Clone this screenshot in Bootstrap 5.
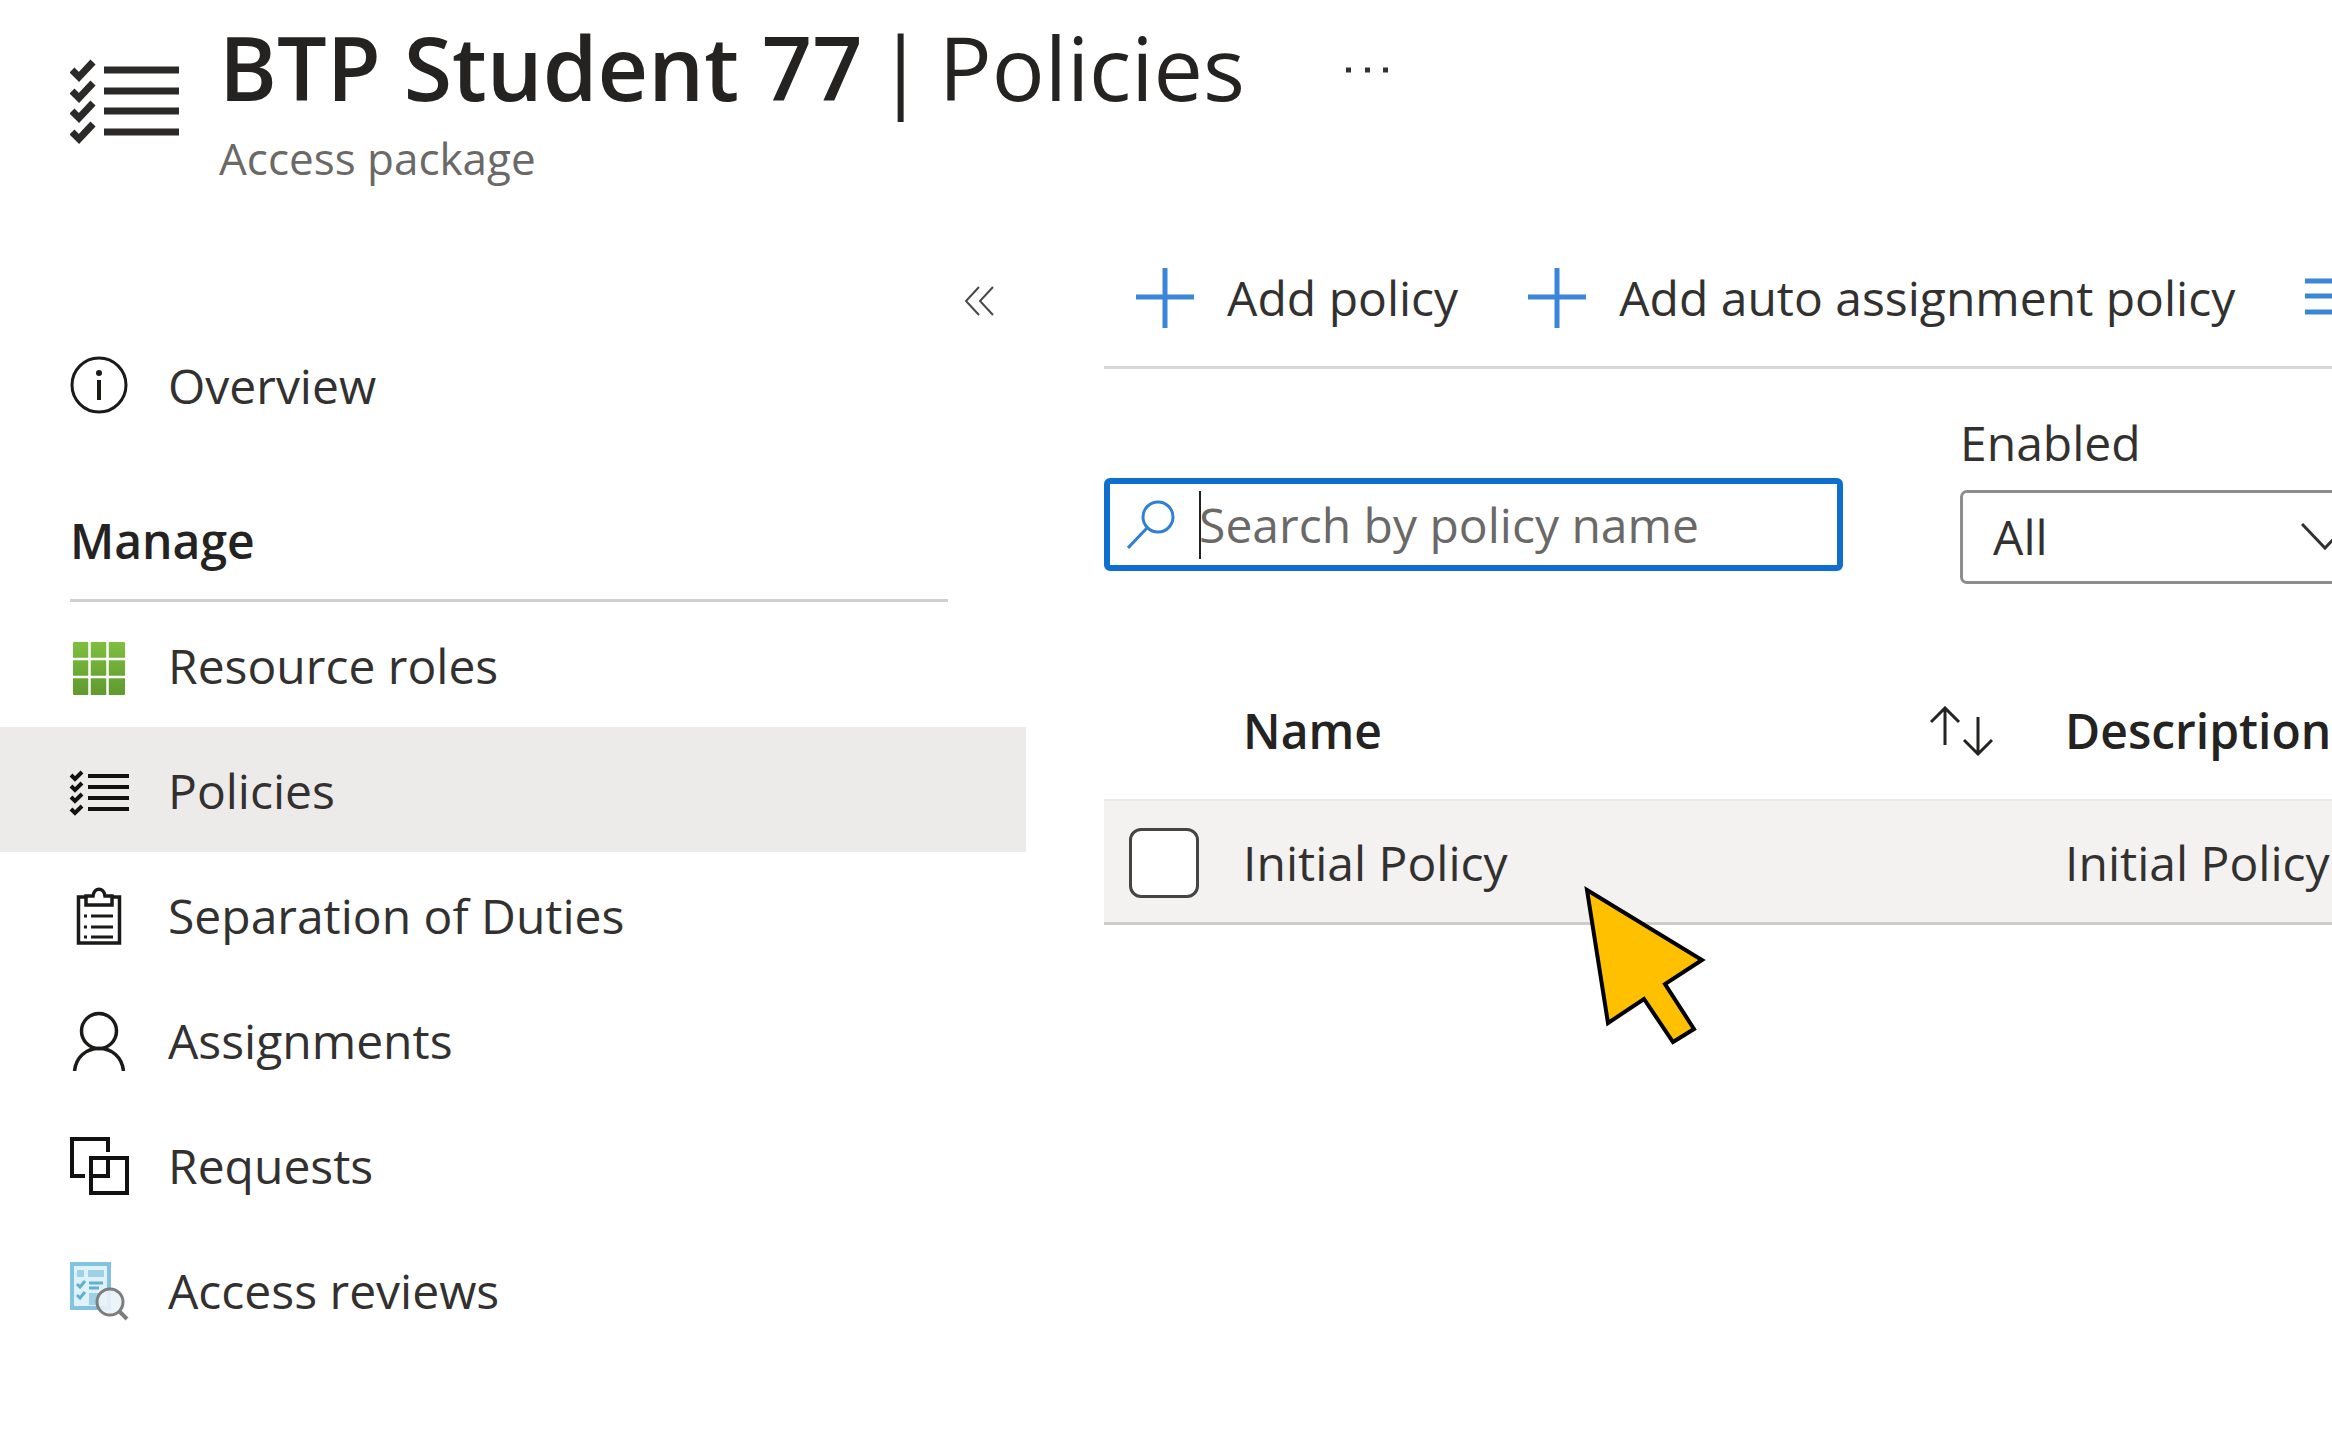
<!DOCTYPE html>
<html lang="en">
<head>
<meta charset="utf-8">
<meta name="viewport" content="width=device-width, initial-scale=1">
<title>BTP Student 77 | Policies</title>
<link rel="stylesheet" href="https://cdn.jsdelivr.net/npm/bootstrap@5.3.0/dist/css/bootstrap.min.css">
<style>
  :root { --ink: #323130; --strong: #242322; --accent: #0f6fd0; }
  body { font-family: "Open Sans", "Noto Sans", sans-serif; font-size: 48px; line-height: 64px; color: var(--ink); background: #fff; overflow: hidden; }
  svg { display: block; flex: none; }
  .page-head { padding: 12px 70px 36px; gap: 40px; }
  .page-head h1 { font-size: 88px; line-height: 110px; font-weight: 600; color: var(--strong); margin: 0; gap: 14px; }
  .head-icon { margin-top: 47px; }
  .subtitle { font-size: 44px; line-height: 72px; color: #6b6967; }
  .side { width: 44%; flex: none; }
  .collapse-bar { height: 92px; padding: 0 32px 6px 0; }
  .side-link { height: 125px; padding-left: 69px; padding-top: 2px; gap: 39px; color: var(--ink); border-radius: 0; }
  .side-link:hover { color: var(--ink); }
  .side-link.active { background: #ecebea; }
  .side-title { margin: 0 78px 0 70px; padding: 62px 0 26px; border-bottom: 3px solid #d0cfce; font-size: 48px; line-height: 64px; font-weight: 600; color: var(--strong); }
  .main-pane { margin-left: 78px; min-width: 0; }
  .toolbar { height: 139px; border-bottom: 3px solid #d8d7d6; padding-left: 32px; gap: 70px; }
  .tool { --bs-btn-color: #323130; font-size: 48px; line-height: 64px; gap: 33px; }
  .filters { padding-top: 42px; gap: 117px; }
  .search-box { width: 739px; height: 93px; flex: none; margin-bottom: 13px; border: 6px solid var(--accent); border-radius: 6px; padding-left: 17px; gap: 24px; }
  .search-box input { font-size: 48px; line-height: 64px; color: var(--ink); outline: 0; }
  .search-box input::placeholder { color: #6b6967; opacity: 1; }
  .caret { left: 0; top: -2px; width: 2px; height: 68px; background: #222; }
  .enabled-box { width: 410px; flex: none; }
  .enabled-box label { margin-bottom: 15px; line-height: 64px; display: block; }
  .enabled-box .form-select {
    height: 94px; font-size: 48px; line-height: 64px; padding: 0 80px 0 30px; color: var(--ink);
    border: 3px solid #8f8d8b; border-radius: 7px;
    background-image: url("data:image/svg+xml,%3Csvg xmlns='http://www.w3.org/2000/svg' viewBox='0 0 48 28'%3E%3Cpath fill='none' stroke='%23323130' stroke-width='3' d='M1 1l23 24L47 1'/%3E%3C/svg%3E");
    background-size: 48px 28px; background-position: right 18px center;
  }
  .policy-table { table-layout: fixed; margin: 79px 0 0; color: var(--ink); border-collapse: separate; border-spacing: 0; }
  .policy-table > :not(caption) > * > * { padding: 0; border: 0; color: inherit; white-space: nowrap; box-shadow: none; vertical-align: middle; }
  .policy-table > thead > tr > th { height: 136px; font-weight: 600; color: var(--strong); }
  .policy-table > tbody > tr > td { height: 126px; padding-top: 2px; background: #f3f2f1; border-top: 2px solid #ebeae9; border-bottom: 3px solid #cdccca; }
  .col-tick { width: 139px; }
  .col-name { width: 822px; }
  .tick { width: 70px; height: 70px; margin: 0 0 0 25px; border: 3px solid #454443; border-radius: 8px; display: block; float: none; }
  .sort-icon { margin-right: 72px; }
  .pointer { left: 339px; top: 48px; z-index: 2; }
</style>
<script src="https://cdn.jsdelivr.net/npm/bootstrap@5.3.0/dist/js/bootstrap.bundle.min.js"></script>
</head>
<body>
<svg width="0" height="0" class="position-absolute" aria-hidden="true">
  <defs>
    <symbol id="plus" viewBox="0 0 58 60"><path d="M29 0v60M0 29h58" stroke="#3a86d8" stroke-width="5" fill="none"/></symbol>
    <linearGradient id="leaf" x1="0" y1="0" x2="0" y2="1"><stop offset="0" stop-color="#7fbf3f"/><stop offset="1" stop-color="#5e9a2e"/></linearGradient>
  </defs>
</svg>

<header class="page-head d-flex align-items-start">
  <svg class="head-icon" width="109" height="86" viewBox="0 0 109 86" aria-hidden="true">
    <g fill="none" stroke="#2b2a29" stroke-width="7">
      <path d="M34 11h75M34 32h75M34 52h75M34 73h75"/>
      <path d="M2 11l7 7L23 3M2 32l7 7L23 24M2 52l7 7L23 44M2 73l7 7L23 65"/>
    </g>
  </svg>
  <div>
    <div class="d-flex align-items-center">
      <h1 class="d-flex"><span>BTP Student 77</span><span class="fw-normal">|</span><span class="fw-normal">Policies</span></h1>
      <button type="button" class="btn border-0 p-0 ms-5" aria-label="More">
        <svg width="150" height="44" viewBox="0 0 150 44"><path d="M53 25h5M72 25h5M90 25h5" stroke="#323130" stroke-width="5"/></svg>
      </button>
    </div>
    <div class="subtitle">Access package</div>
  </div>
</header>

<div class="d-flex align-items-start">
  <nav class="side" aria-label="Access package">
    <div class="collapse-bar d-flex justify-content-end align-items-end">
      <button type="button" class="btn border-0 p-0" aria-label="Collapse menu">
        <svg width="30" height="30" viewBox="0 0 30 30"><path d="M15 1L2 15l13 14M29 1L16 15l13 14" fill="none" stroke="#4a4948" stroke-width="2"/></svg>
      </button>
    </div>
    <div class="nav flex-column">
      <a href="#" class="side-link nav-link d-flex align-items-center pb-0 pe-0">
        <svg width="60" height="60" viewBox="0 0 60 60"><circle cx="30" cy="29" r="27" fill="none" stroke="#1b1a19" stroke-width="3"/><path d="M30 24v20" stroke="#1b1a19" stroke-width="4"/><circle cx="30" cy="17" r="3" fill="#1b1a19"/></svg>
        Overview
      </a>
    </div>
    <h2 class="side-title">Manage</h2>
    <div class="nav flex-column">
      <a href="#" class="side-link nav-link d-flex align-items-center pb-0 pe-0">
        <svg width="60" height="60" viewBox="0 0 60 60"><rect x="4" y="6" width="52" height="53" rx="1" fill="url(#leaf)"/><path d="M20.500 6v53M38.500 6v53M4 23h52M4 41h52" stroke="#fff" stroke-width="2.500"/></svg>
        Resource roles
      </a>
      <a href="#" class="side-link nav-link active d-flex align-items-center pb-0 pe-0" aria-current="page">
        <svg width="60" height="60" viewBox="0 0 60 60"><g fill="none" stroke="#111" stroke-width="4"><path d="M19 15h41M19 26h41M19 37h41M19 48h41"/><path d="M2 14l4 4 7-7M2 25l4 4 7-7M2 36l4 4 7-7M2 48l4 4 7-7"/></g></svg>
        Policies
      </a>
      <a href="#" class="side-link nav-link d-flex align-items-center pb-0 pe-0">
        <svg width="60" height="60" viewBox="0 0 60 60"><g fill="none" stroke="#1b1a19" stroke-width="3.500"><path d="M16 11H9.500v46h41V11H44"/><path d="M17 10h7c1-9 11-9 12 0h7v9H17z"/><path d="M15 30h3M15 41h3M15 51h3M22 30h22M22 41h22M22 51h22" stroke-width="3"/></g></svg>
        Separation of Duties
      </a>
      <a href="#" class="side-link nav-link d-flex align-items-center pb-0 pe-0">
        <svg width="60" height="60" viewBox="0 0 60 60"><g fill="none" stroke="#1b1a19" stroke-width="3.500"><circle cx="30" cy="20" r="17.500"/><path d="M5.500 60C7 46 17 37.500 30 37.500S53 46 54.500 60"/></g></svg>
        Assignments
      </a>
      <a href="#" class="side-link nav-link d-flex align-items-center pb-0 pe-0">
        <svg width="60" height="60" viewBox="0 0 60 60"><g fill="none" stroke="#111" stroke-width="4"><path d="M16 40H3V3h36v13M23 40h16V23"/><path d="M22 22h36v35H22z"/></g></svg>
        Requests
      </a>
      <a href="#" class="side-link nav-link d-flex align-items-center pb-0 pe-0">
        <svg width="60" height="60" viewBox="0 0 60 60">
          <rect x="3" y="3" width="37" height="44" fill="#dff1f9" stroke="#82c4df" stroke-width="4"/>
          <path d="M8 9h7v7H8zM19 9h16v7H19z" fill="#9fd0e6"/>
          <path d="M8 23l3 3 5-6M8 34l3 3 5-6M20 22h14M20 27h10" fill="none" stroke="#5fb0d3" stroke-width="3"/>
          <path d="M20 32h12v12H20z" fill="#9fd0e6"/>
          <path d="M50 50l8 8" stroke="#7d7d7d" stroke-width="4"/>
          <circle cx="41" cy="41" r="13" fill="#e9f3f8" fill-opacity=".9" stroke="#7d7d7d" stroke-width="3"/>
        </svg>
        Access reviews
      </a>
    </div>
  </nav>

  <main class="main-pane flex-grow-1">
    <div class="toolbar d-flex align-items-center text-nowrap">
      <button type="button" class="tool btn border-0 p-0 d-flex align-items-center">
        <svg width="58" height="60"><use href="#plus"/></svg>Add policy
      </button>
      <button type="button" class="tool btn border-0 p-0 d-flex align-items-center">
        <svg width="58" height="60"><use href="#plus"/></svg>Add auto assignment policy
      </button>
      <button type="button" class="tool btn border-0 p-0" aria-label="Reorder policies">
        <svg width="58" height="40" viewBox="0 0 58 40"><path d="M0 3h58M0 18h58M0 34h58" stroke="#3a86d8" stroke-width="5"/></svg>
      </button>
    </div>

    <div class="filters d-flex align-items-end">
      <div class="search-box d-flex align-items-center">
        <svg width="48" height="50" viewBox="0 0 48 50" aria-hidden="true"><g fill="none" stroke="#2f7fd6" stroke-width="3"><circle cx="31" cy="17" r="15"/><path d="M20 28L1 48"/></g></svg>
        <div class="position-relative flex-grow-1">
          <input type="text" class="border-0 p-0 w-100 d-block bg-transparent" placeholder="Search by policy name" aria-label="Search by policy name">
          <span class="caret position-absolute"></span>
        </div>
      </div>
      <div class="enabled-box">
        <label for="enabled">Enabled</label>
        <select id="enabled" class="form-select"><option>All</option><option>Yes</option><option>No</option></select>
      </div>
    </div>

    <table class="policy-table table">
      <colgroup><col class="col-tick"><col class="col-name"><col></colgroup>
      <thead>
        <tr>
          <th scope="col" aria-label="Select"></th>
          <th scope="col">
            <div class="d-flex align-items-center justify-content-between">Name
              <svg class="sort-icon" width="63" height="50" viewBox="0 0 63 50" aria-hidden="true"><path d="M15 39V2M1 16L15 2l14 14M48 11v37M34 34l14 14 14-14" fill="none" stroke="#242322" stroke-width="3"/></svg>
            </div>
          </th>
          <th scope="col">Description</th>
        </tr>
      </thead>
      <tbody>
        <tr>
          <td><input type="checkbox" class="tick form-check-input" aria-label="Select Initial Policy"></td>
          <td>
            <div class="position-relative">Initial Policy
              <svg class="pointer position-absolute" width="124" height="168" viewBox="1583 880 124 168" aria-hidden="true"><path d="M1588 891L1703 961l-37 24 29 45-21 13-29-43-36 24z" fill="#ffc000" stroke="#000" stroke-width="4"/></svg>
            </div>
          </td>
          <td>Initial Policy</td>
        </tr>
      </tbody>
    </table>
  </main>
</div>
</body>
</html>
